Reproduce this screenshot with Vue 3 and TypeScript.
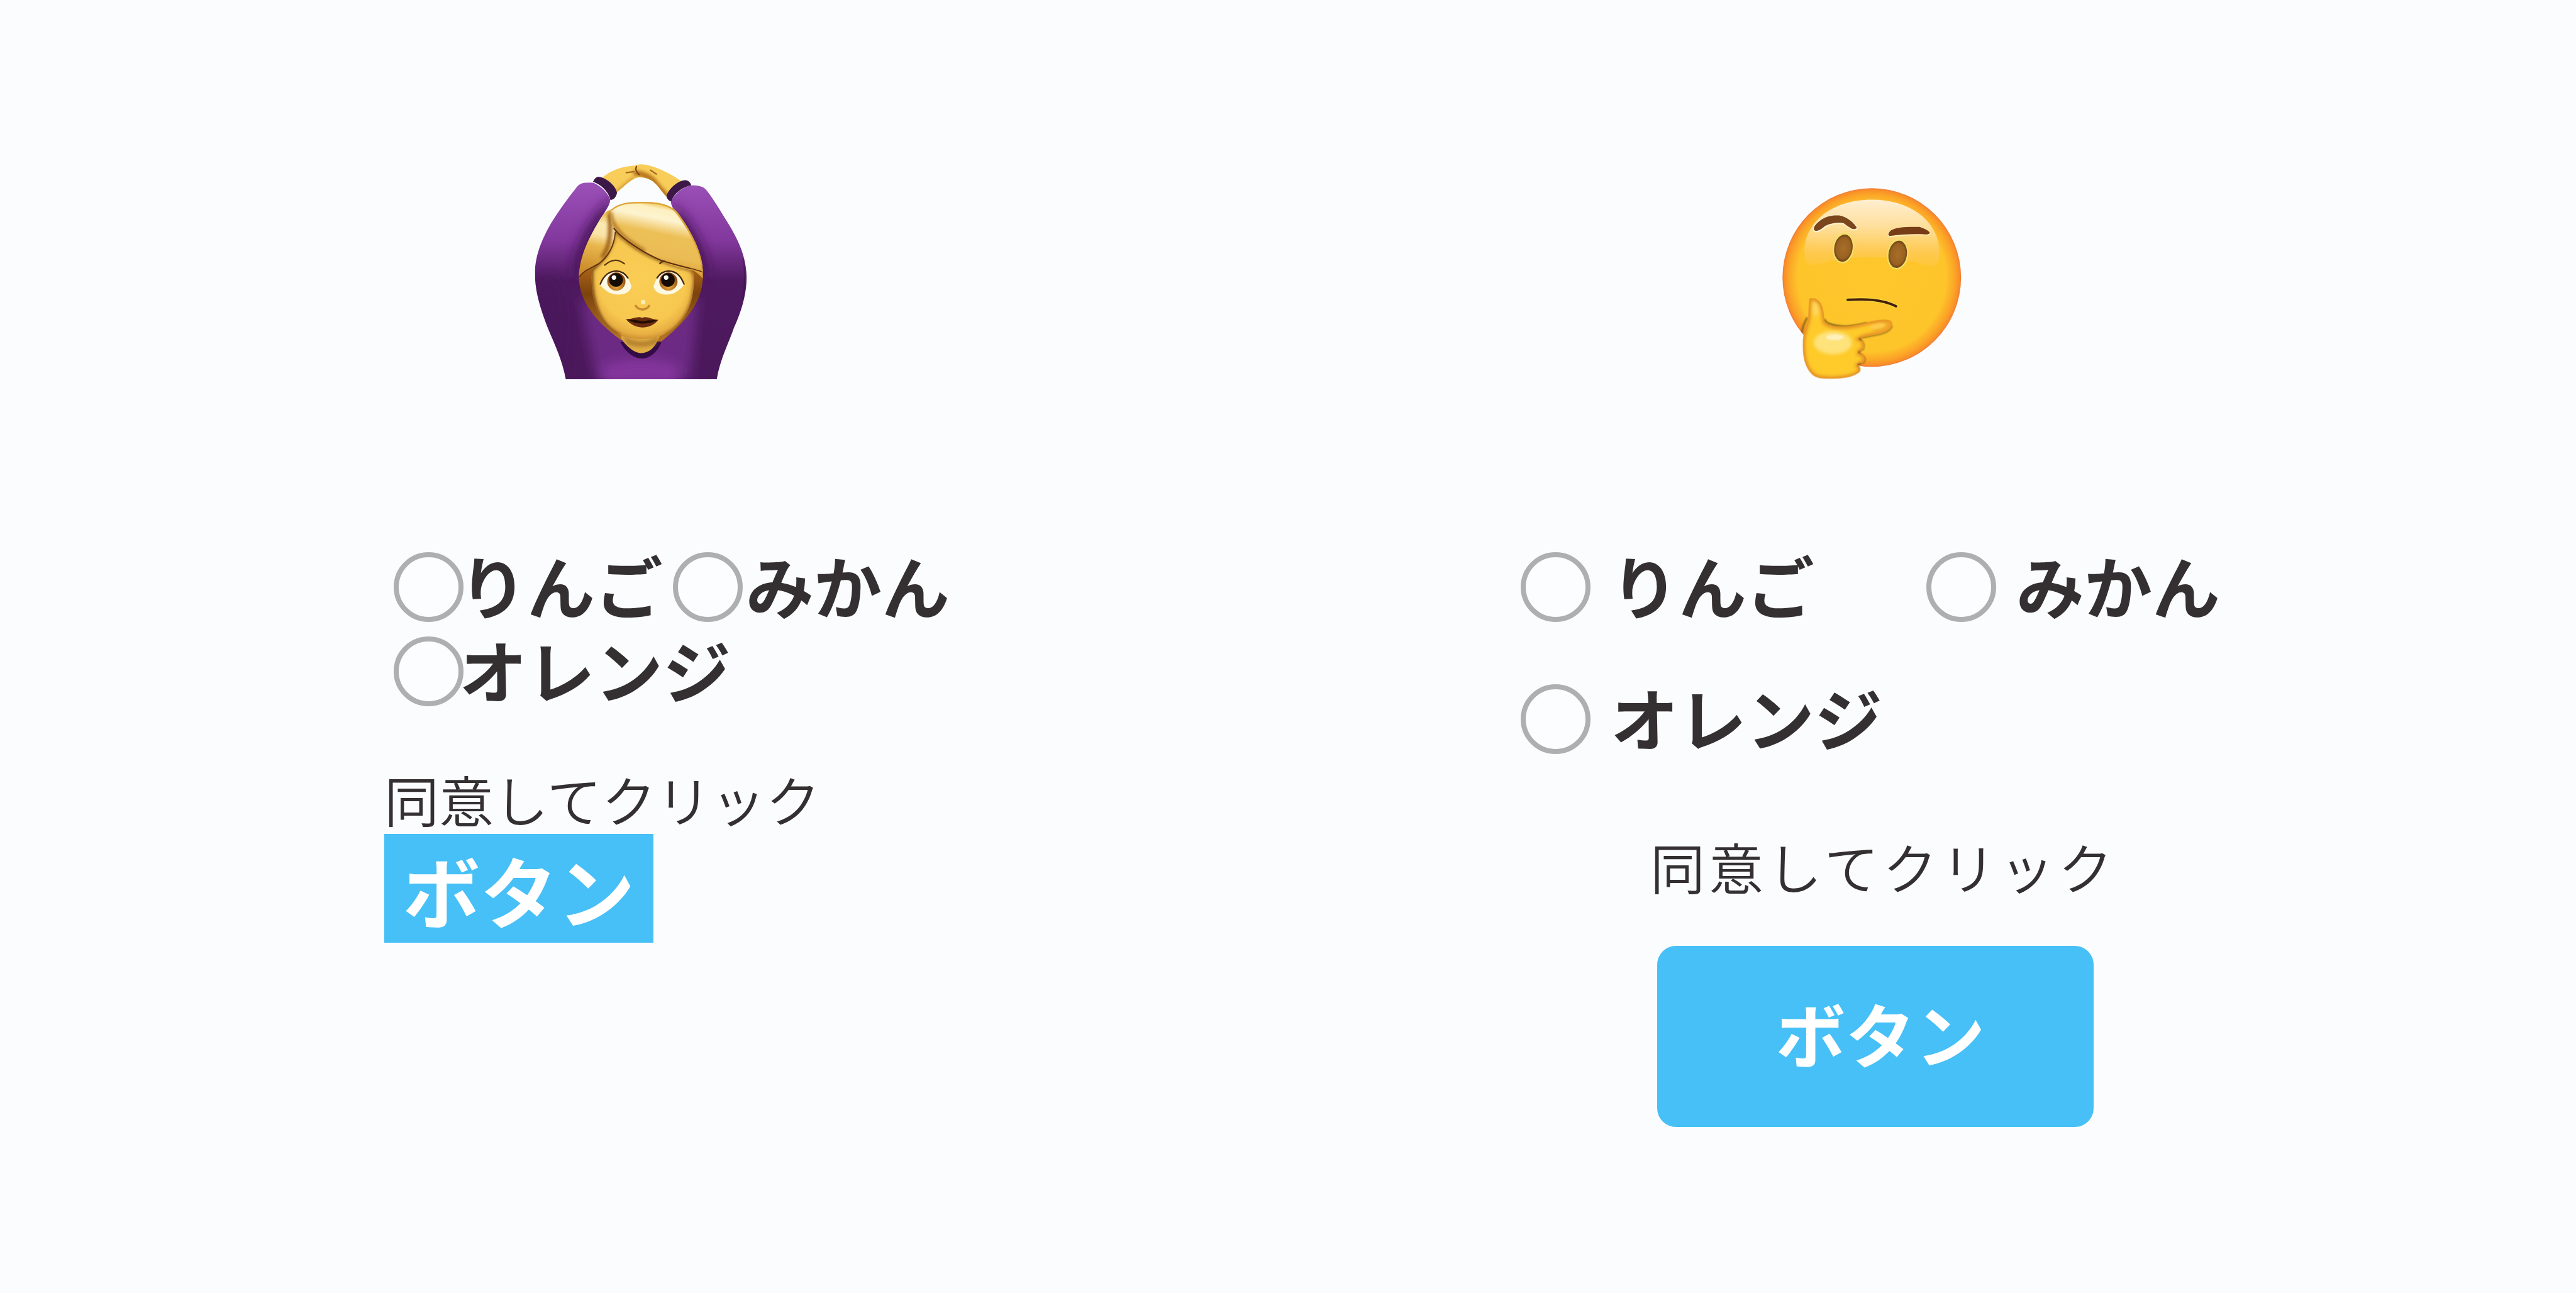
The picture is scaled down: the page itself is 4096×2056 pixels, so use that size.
<script setup lang="ts">
import { ref } from 'vue'

const fruits: string[] = ['りんご', 'みかん', 'オレンジ']
const tightChoice = ref<string>('')
const roomyChoice = ref<string>('')
</script>

<template>
  <main class="page">
    <section class="panel tight">
      <div class="face">
        <svg class="ok-woman" viewBox="120 80 1310 1330" role="img" aria-label="OK">
          <defs>
            <linearGradient id="sleeve" x1="0" y1="0" x2="0" y2="1">
              <stop offset="0" stop-color="#9b51b8" />
              <stop offset="0.3" stop-color="#81379b" />
              <stop offset="0.5" stop-color="#4f1a60" />
              <stop offset="1" stop-color="#4b185b" />
            </linearGradient>
            <linearGradient id="skin" x1="0" y1="0" x2="0" y2="1">
              <stop offset="0" stop-color="#f9cf5c" />
              <stop offset="1" stop-color="#e9b344" />
            </linearGradient>
            <radialGradient id="cheeks" gradientUnits="userSpaceOnUse" cx="785" cy="800" r="370">
              <stop offset="0" stop-color="#facd55" />
              <stop offset="0.72" stop-color="#f7c850" />
              <stop offset="0.9" stop-color="#e8af42" />
              <stop offset="1" stop-color="#c98a2e" />
            </radialGradient>
            <linearGradient id="fringe" gradientUnits="userSpaceOnUse" x1="840" y1="317" x2="760" y2="720">
              <stop offset="0" stop-color="#f0c452" />
              <stop offset="0.08" stop-color="#fdf0c0" />
              <stop offset="0.22" stop-color="#fdf3cf" />
              <stop offset="0.44" stop-color="#edc057" />
              <stop offset="0.75" stop-color="#ebbc55" />
              <stop offset="1" stop-color="#d79a34" />
            </linearGradient>
            <linearGradient id="lock" gradientUnits="userSpaceOnUse" x1="540" y1="370" x2="470" y2="760">
              <stop offset="0" stop-color="#e8b543" />
              <stop offset="0.2" stop-color="#fbe8b4" />
              <stop offset="0.38" stop-color="#fae3a6" />
              <stop offset="0.55" stop-color="#e9b74e" />
              <stop offset="1" stop-color="#c98727" />
            </linearGradient>
            <linearGradient id="backHair" x1="0" y1="0" x2="0" y2="1">
              <stop offset="0" stop-color="#e8b141" />
              <stop offset="0.5" stop-color="#a45f16" />
              <stop offset="0.66" stop-color="#7c430d" />
              <stop offset="1" stop-color="#b77624" />
            </linearGradient>
            <radialGradient id="iris" cx="0.5" cy="0.75" r="0.6">
              <stop offset="0" stop-color="#f0ae3c" />
              <stop offset="1" stop-color="#8d4b12" />
            </radialGradient>
            <clipPath id="bodyClip">
              <path d="M312 1410C290 1290 250 1210 200 1090C150 960 122 860 122 760C122 640 170 540 220 450C270 370 320 300 380 225C400 198 430 195 482 198Q560 235 586 302C588 340 540 390 515 445L700 800L1080 520C1000 400 960 350 960 312Q1010 230 1085 215C1130 215 1160 220 1180 245C1230 310 1270 380 1320 460C1380 560 1425 660 1427 780C1427 880 1400 980 1350 1090C1320 1180 1265 1280 1243 1410Z" />
            </clipPath>
            <clipPath id="faceClip">
              <path d="M615 480C600 600 540 670 474 735C460 900 500 1160 780 1163C1010 1160 1112 980 1102 760L1060 715C880 680 720 600 615 480Z" />
            </clipPath>
            <clipPath id="armsClip">
              <path d="M535 168C590 125 650 98 740 93Q780 75 835 95C900 115 970 150 1025 190Q965 220 935 285C890 245 865 165 770 165C725 165 690 205 625 260Q600 190 535 168Z" />
            </clipPath>
            <filter id="soft40" x="-50%" y="-50%" width="200%" height="200%"><feGaussianBlur stdDeviation="36" /></filter>
            <filter id="soft10" x="-50%" y="-50%" width="200%" height="200%"><feGaussianBlur stdDeviation="10" /></filter>
            <filter id="soft3" x="-50%" y="-50%" width="200%" height="200%"><feGaussianBlur stdDeviation="3" /></filter>
          </defs>

          <g clip-path="url(#armsClip)">
            <path fill="#f8cd59" d="M520 70H1040V300H520Z" />
            <path fill="none" stroke="#b9771f" stroke-width="36" stroke-linecap="round" filter="url(#soft10)" d="M745 140Q830 150 870 210L940 290" />
            <path fill="none" stroke="#d49a35" stroke-width="20" filter="url(#soft10)" d="M735 168Q690 200 625 260" />
            <path fill="none" stroke="#7d4a14" stroke-width="9" stroke-linecap="round" filter="url(#soft3)" d="M748 98Q735 122 765 148" />
            <path fill="none" stroke="#a66a22" stroke-width="9" stroke-linecap="round" filter="url(#soft3)" d="M685 137L732 130M835 122L870 145" />
          </g>

          <g clip-path="url(#bodyClip)">
            <path fill="url(#sleeve)" d="M100 190H1440V1420H100Z" />
            <path fill="#4c185d" filter="url(#soft40)" d="M620 270C480 380 360 560 350 780L700 800L1200 780C1190 600 1080 420 950 300L1000 400L770 620L560 420Z" />
            <ellipse cx="200" cy="1080" rx="120" ry="330" fill="#47165a" filter="url(#soft40)" opacity="0.5" />
            <path fill="#6c2984" filter="url(#soft40)" d="M400 900L500 1410H1080L1130 900L780 1150Z" />
            <path fill="#84369c" filter="url(#soft40)" d="M540 1440V1330Q780 1240 1010 1330V1440Z" />
            <path fill="none" stroke="#32104a" stroke-width="9" filter="url(#soft3)" opacity="0.35" d="M1405 670Q1428 780 1400 920" />
          </g>
          <path fill="#3c1848" d="M480 192Q495 160 518 162C570 170 625 225 628 262Q620 300 588 306C575 250 530 210 480 192Z" />
          <path fill="#3c1848" d="M1086 214Q1075 183 1048 183C1005 183 940 240 933 285Q940 308 962 314C980 265 1030 225 1086 214Z" />

          <path fill="#330744" filter="url(#soft3)" d="M648 1180C680 1240 730 1282 780 1282C830 1282 880 1240 902 1178Z" />
          <path fill="url(#backHair)" d="M590 365C640 325 700 317 780 317C880 317 950 330 1000 380C1090 500 1160 640 1157 790C1150 950 1040 1065 900 1178L655 1170C500 1060 395 930 393 780C395 640 470 520 520 430C545 395 560 375 590 365Z" />
          <path fill="#dfad44" d="M655 1130H900L875 1178C850 1230 810 1249 775 1249C740 1249 690 1215 655 1160Z" />
          <path fill="#97601f" opacity="0.55" filter="url(#soft10)" d="M660 1140Q780 1215 890 1140L870 1195Q780 1225 690 1195Z" />

          <path fill="url(#cheeks)" d="M615 480C600 600 540 670 474 735C460 900 500 1160 780 1163C1010 1160 1112 980 1102 760L1060 715C880 680 720 600 615 480Z" />
          <g clip-path="url(#faceClip)">
            <path fill="none" stroke="#5d2e08" stroke-width="18" filter="url(#soft10)" d="M610 490C600 610 540 680 472 735C462 900 510 1080 640 1140" />
            <path fill="none" stroke="#7c4612" stroke-width="14" filter="url(#soft10)" d="M615 490C720 610 880 690 1080 735Q1120 760 1100 860C1090 1000 1000 1100 930 1140" />
          </g>

          <path fill="url(#lock)" d="M590 365C555 375 540 395 520 430C440 560 400 660 393 780C430 735 470 730 520 690C590 620 622 560 622 490C600 450 580 420 590 365Z" />
          <path fill="none" stroke="#9a5d17" stroke-width="24" filter="url(#soft10)" d="M582 390C590 500 588 590 535 660" />
          <path fill="none" stroke="#5f330b" stroke-width="7" filter="url(#soft3)" d="M618 500C612 590 570 660 515 698C470 725 420 740 396 778" />
          <path fill="url(#fringe)" d="M594 368C640 325 700 317 780 317C890 317 960 335 1000 385C1090 505 1157 640 1157 752C1000 725 900 690 800 632C690 570 620 510 603 470C585 430 582 390 594 368Z" />
          <path fill="none" stroke="#a0631a" stroke-width="15" filter="url(#soft10)" d="M592 380C590 470 680 550 800 617" />
          <path fill="none" stroke="#5a2f0a" stroke-width="8" filter="url(#soft3)" d="M608 478C660 550 810 640 900 677C990 708 1070 720 1152 748" />
          <path fill="none" stroke="#dda538" stroke-width="9" filter="url(#soft3)" d="M594 368C640 325 700 321 780 321C890 321 960 337 998 387C1088 507 1152 640 1153 745" />
          <path fill="#dda53c" d="M1078 728Q1130 755 1157 790V752Z" />

          <g fill="none" stroke="#5d3710" stroke-linecap="round" filter="url(#soft3)">
            <path stroke-width="9" d="M553 706Q615 652 673 698" />
            <path stroke-width="10" d="M893 696Q905 680 925 684" />
          </g>
          <g>
            <path fill="#fdf8e2" d="M522 825C545 765 580 740 625 740C675 742 705 795 717 838C710 870 680 888 635 888C580 888 545 855 522 825Z" />
            <circle cx="624" cy="808" r="56" fill="url(#iris)" />
            <circle cx="622" cy="798" r="42" fill="#150c05" />
            <circle cx="609" cy="783" r="14" fill="#fff" filter="url(#soft3)" />
            <path fill="none" stroke="#442508" stroke-width="9" stroke-linecap="round" filter="url(#soft3)" d="M525 823C548 765 580 744 625 743Q670 745 695 785" />
          </g>
          <g>
            <path fill="#fdf8e2" d="M1043 825C1020 765 990 740 945 740C895 742 865 795 853 838C860 870 890 888 935 888C985 888 1020 855 1043 825Z" />
            <circle cx="945" cy="808" r="56" fill="url(#iris)" />
            <circle cx="942" cy="798" r="42" fill="#150c05" />
            <circle cx="931" cy="783" r="14" fill="#fff" filter="url(#soft3)" />
            <path fill="none" stroke="#442508" stroke-width="9" stroke-linecap="round" filter="url(#soft3)" d="M1041 823C1018 765 990 744 945 743Q900 745 875 785" />
          </g>
          <path fill="none" stroke="#c98c31" stroke-width="14" stroke-linecap="round" filter="url(#soft3)" d="M744 958Q755 978 785 980Q815 978 826 958" />
          <circle cx="789" cy="934" r="14" fill="#fdebb2" filter="url(#soft3)" />
          <path fill="#6a2c10" d="M683 1039C720 1040 745 1025 770 1027Q783 1034 797 1027C825 1027 850 1042 883 1044C860 1075 825 1091 785 1091C745 1090 705 1070 683 1039Z" />
          <path fill="#200c04" filter="url(#soft3)" d="M690 1042Q740 1044 785 1052Q830 1044 876 1046Q830 1068 785 1067Q735 1066 690 1042Z" />
        </svg>
      </div>

      <fieldset class="options">
        <label v-for="fruit in fruits" :key="fruit" class="option">
          <input v-model="tightChoice" type="radio" name="tight-fruit" :value="fruit">
          <span>{{ fruit }}</span>
        </label>
      </fieldset>

      <p class="consent">同意してクリック</p>
      <button type="button" class="action">ボタン</button>
    </section>

    <section class="panel roomy">
      <div class="face">
        <svg class="thinking" viewBox="138 106 1106 1180" role="img" aria-label="Hmm">
          <defs>
            <radialGradient id="ball" cx="0.5" cy="0.5" r="0.5">
              <stop offset="0" stop-color="#fec72c" />
              <stop offset="0.83" stop-color="#fec52b" />
              <stop offset="0.93" stop-color="#fba527" />
              <stop offset="0.98" stop-color="#f98f28" />
              <stop offset="1" stop-color="#f07a38" />
            </radialGradient>
            <linearGradient id="shine" x1="0" y1="0" x2="0" y2="1">
              <stop offset="0" stop-color="#ffeed0" />
              <stop offset="0.4" stop-color="#fedf9c" />
              <stop offset="0.8" stop-color="#fec94f" />
              <stop offset="1" stop-color="#fec739" />
            </linearGradient>
            <radialGradient id="eye">
              <stop offset="0" stop-color="#a66e27" />
              <stop offset="0.7" stop-color="#9a6222" />
              <stop offset="1" stop-color="#6b3c12" />
            </radialGradient>
            <clipPath id="ballClip"><circle cx="690" cy="658" r="551" /></clipPath>
            <clipPath id="handClip">
              <path d="M305 788C340 775 375 800 387 845C397 880 395 910 400 932C420 955 470 962 530 960C620 955 690 918 770 918C810 918 822 935 816 955C805 990 760 1003 720 1010C680 1018 640 1020 616 1037C640 1045 648 1070 642 1095C635 1110 610 1108 613 1125C645 1130 652 1155 645 1175C635 1192 615 1188 606 1200C625 1212 628 1235 605 1250C560 1280 480 1284 440 1284C370 1282 350 1280 320 1255C270 1205 263 1130 264 1060C265 1000 290 950 298 905C300 860 300 820 305 788Z" />
            </clipPath>
            <filter id="haze10" x="-50%" y="-50%" width="200%" height="200%"><feGaussianBlur stdDeviation="10" /></filter>
            <filter id="haze4" x="-50%" y="-50%" width="200%" height="200%"><feGaussianBlur stdDeviation="4" /></filter>
          </defs>
          <circle cx="690" cy="658" r="551" fill="url(#ball)" />
          <path fill="url(#shine)" d="M275 500C275 320 440 178 690 178C940 178 1105 320 1107 500C1107 570 1090 592 1050 586C960 570 900 533 690 533C500 533 420 562 360 577C300 590 275 570 275 500Z" />

          <path fill="#fff3d3" stroke="#fff3d3" stroke-width="11" d="M345 374C325 367 330 342 350 327C400 277 450 275 490 277C540 287 580 322 597 352C595 367 575 362 560 355C530 337 520 325 510 324C460 320 420 332 400 347C375 367 360 374 345 374Z" />
          <path fill="#7b461b" d="M343 370C325 365 332 342 350 325C400 275 450 273 490 275C540 285 580 320 597 350C595 363 575 361 560 353C530 335 520 323 510 321C460 317 420 328 400 342C375 362 360 372 343 370Z" />
          <path fill="#ffedb8" stroke="#ffedb8" stroke-width="9" d="M800 405C785 395 795 378 810 368C850 348 900 347 985 348Q1030 360 1048 382C1046 396 1035 395 1020 394C950 390 880 396 800 405Z" />
          <path fill="#783d17" d="M800 402C785 395 795 378 810 366C850 346 900 345 985 346Q1030 360 1048 380C1046 393 1035 393 1020 392C950 388 870 392 800 402Z" />

          <ellipse cx="515" cy="477" rx="61" ry="89" transform="rotate(9 515 477)" fill="url(#eye)" stroke="#efe168" stroke-width="9" />
          <ellipse cx="850" cy="515" rx="61" ry="89" transform="rotate(9 850 515)" fill="url(#eye)" stroke="#efe168" stroke-width="9" />

          <path fill="none" stroke="#ecdf3a" stroke-width="24" stroke-linecap="round" d="M541 796C640 790 750 790 840 836" />
          <path fill="none" stroke="#4a1d10" stroke-width="15" stroke-linecap="round" d="M541 796C640 790 750 790 840 836" />

          <g clip-path="url(#ballClip)" fill="none" stroke="#5f4a0c" filter="url(#haze4)">
            <path stroke-width="10" d="M398 915Q408 955 530 960Q590 957 660 938" opacity="0.85" />
            <path stroke-width="12" d="M292 905Q265 950 258 1000" opacity="0.7" />
            <path stroke-width="9" d="M616 1037Q650 1065 638 1100Q605 1115 615 1128Q660 1150 642 1180L606 1196M816 955Q800 1000 720 1012L620 1032" opacity="0.65" />
          </g>
          <g clip-path="url(#handClip)">
            <path fill="#fecb2a" d="M250 770H830V1290H250Z" />
            <ellipse cx="450" cy="1060" rx="118" ry="72" fill="#fee27a" filter="url(#haze10)" />
            <ellipse cx="342" cy="850" rx="24" ry="48" fill="#fed75c" filter="url(#haze10)" />
            <path fill="none" stroke="#e58f26" stroke-width="30" filter="url(#haze10)" d="M305 788C340 775 375 800 387 845C397 880 395 910 400 932C420 955 470 962 530 960C620 955 690 918 770 918C810 918 822 935 816 955C805 990 760 1003 720 1010C680 1018 640 1020 616 1037C640 1045 648 1070 642 1095C635 1110 610 1108 613 1125C645 1130 652 1155 645 1175C635 1192 615 1188 606 1200C625 1212 628 1235 605 1250C560 1280 480 1284 440 1284C370 1282 350 1280 320 1255C270 1205 263 1130 264 1060C265 1000 290 950 298 905C300 860 300 820 305 788Z" />
            <path fill="#ee9f2c" opacity="0.6" filter="url(#haze10)" d="M700 945Q790 910 825 940Q815 990 700 1005Z" />
            <ellipse cx="726" cy="958" rx="50" ry="16" transform="rotate(-10 726 958)" fill="#fecb4e" filter="url(#haze4)" />
            <ellipse cx="461" cy="1027" rx="56" ry="18" fill="#fff0bc" filter="url(#haze4)" />
            <path fill="none" stroke="#5b3510" stroke-width="9" filter="url(#haze4)" d="M612 1036L628 1042M608 1118L628 1122M604 1198L622 1192" />
          </g>
        </svg>
      </div>

      <fieldset class="options">
        <label v-for="fruit in fruits" :key="fruit" class="option">
          <input v-model="roomyChoice" type="radio" name="roomy-fruit" :value="fruit">
          <span>{{ fruit }}</span>
        </label>
      </fieldset>

      <p class="consent">同意してクリック</p>
      <button type="button" class="action">ボタン</button>
    </section>
  </main>
</template>

<style>
body {
  background: #fbfcfe;
}
</style>

<style scoped>
.page {
  box-sizing: border-box;
  display: flex;
  justify-content: space-between;
  min-height: 100vh;
  padding: 260px 562px 0 611px;
  color: #343031;
  font-family: "Noto Sans CJK JP", sans-serif;
}

.panel {
  display: flex;
  flex-direction: column;
  align-items: flex-start;
}

.tight {
  width: 920px;
}

.roomy {
  width: 1116px;
}

.face {
  display: flex;
  align-items: flex-end;
  justify-content: center;
  height: 343px;
  margin-bottom: 275px;
}

.tight .face {
  width: 816px;
}

.roomy .face {
  width: 100%;
}

.ok-woman {
  width: 338px;
  height: 343px;
}

.thinking {
  width: 285px;
  height: 304px;
}

.options {
  display: flex;
  flex-wrap: wrap;
  align-self: stretch;
  margin: 0;
  padding: 0;
  border: 0;
}

.tight .options {
  gap: 23px 16px;
  padding-left: 15px;
}

.roomy .options {
  gap: 99px 178px;
}

.option {
  display: flex;
  align-items: flex-start;
  height: 111px;
  font-size: 108px;
  font-weight: 700;
  line-height: 102px;
  white-space: nowrap;
}

.option input {
  flex: none;
  box-sizing: border-box;
  width: 111px;
  height: 111px;
  margin: 0;
  border: 8px solid #adafb1;
  border-radius: 50%;
  appearance: none;
  background: #fcfdfe;
}

.option input:checked {
  box-shadow: inset 0 0 0 24px #fcfdfe;
  background: #46c0f6;
}

.tight .option input {
  margin-right: -7px;
}

.tight .option:nth-child(2) input {
  margin-right: 5px;
}

.roomy .option input {
  margin-right: 32px;
}

.consent {
  margin: 0;
  font-size: 87px;
  font-weight: 350;
  line-height: 100px;
  white-space: nowrap;
}

.tight .consent {
  margin-top: 97px;
  margin-bottom: 6px;
}

.roomy .consent {
  margin-top: 128px;
  margin-left: 206px;
  letter-spacing: 6px;
}

.action {
  box-sizing: border-box;
  border: 0;
  background: #46c0f6;
  color: #fff;
  font-family: inherit;
  font-weight: 700;
  line-height: 160px;
  cursor: pointer;
}

.tight .action {
  width: 428px;
  height: 173px;
  padding: 0;
  font-size: 123px;
}

.roomy .action {
  width: 694px;
  height: 288px;
  margin-top: 77px;
  margin-left: 217px;
  padding: 0 0 12px 16px;
  border-radius: 30px;
  font-size: 111px;
}
</style>
